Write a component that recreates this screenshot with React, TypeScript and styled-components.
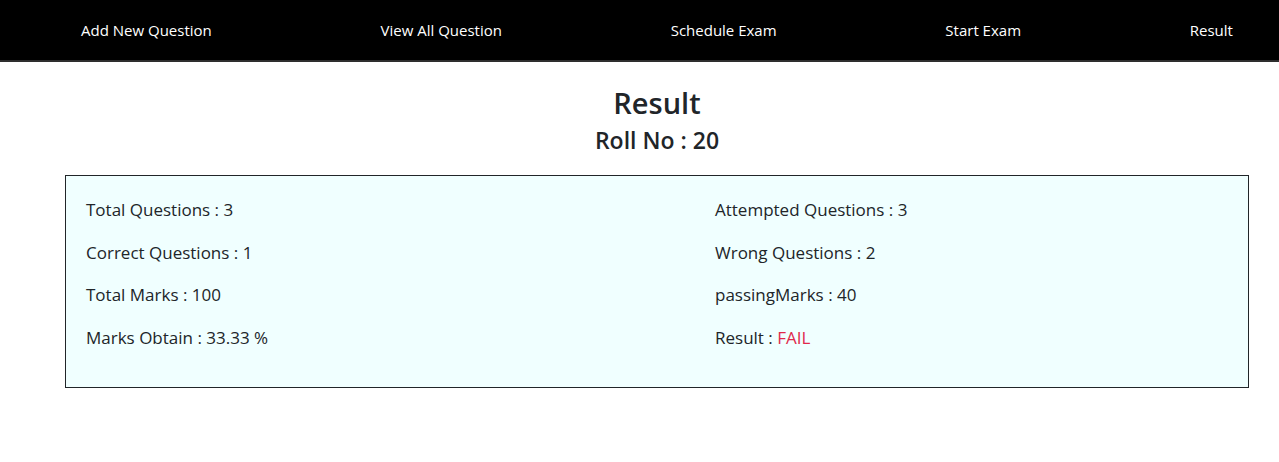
import React from "react";
import styled, { createGlobalStyle } from "styled-components";

const Global = createGlobalStyle`
  html, body { margin: 0; padding: 0; background: #fff; }
  body { font-family: "Open Sans", "Noto Sans", sans-serif; color: #212529; }
`;

const Nav = styled.nav`
  height: 60px;
  background: #000;
  border-bottom: 2px solid #2e2e2e;
  display: flex;
  align-items: center;
  justify-content: space-between;
  padding: 0 46px 0 81px;
`;

const NavLink = styled.a`
  color: #fff;
  font-size: 15px;
  text-decoration: none;
`;

const Main = styled.main`
  margin: 0 30px 0 65px;
`;

const Title = styled.h3`
  margin: 23px 0 0;
  text-align: center;
  font-size: 29px;
  font-weight: 600;
  line-height: 36px;
`;

const Sub = styled.h4`
  margin: 4px 0 20px;
  text-align: center;
  font-size: 23px;
  font-weight: 600;
  line-height: 30px;
`;

const Card = styled.section`
  background: #f0ffff;
  border: 1px solid #212529;
  height: 213px;
  box-sizing: border-box;
  display: grid;
  grid-template-columns: 629px 1fr;
  grid-auto-rows: 42.7px;
  padding: 21px 20px 0 20px;
`;

const Item = styled.p`
  margin: 0;
  font-size: 17px;
  font-weight: 500;
  line-height: 26px;
`;

const Fail = styled.span`
  color: #e0294b;
`;

const rows: [React.ReactNode, React.ReactNode][] = [
  ["Total Questions : 3", "Attempted Questions : 3"],
  ["Correct Questions : 1", "Wrong Questions : 2"],
  ["Total Marks : 100", "passingMarks : 40"],
  ["Marks Obtain : 33.33 %", <>Result : <Fail>FAIL</Fail></>],
];

export default function App() {
  return (
    <>
      <Global />
      <Nav>
        {["Add New Question", "View All Question", "Schedule Exam", "Start Exam", "Result"].map((t) => (
          <NavLink key={t} href="#">{t}</NavLink>
        ))}
      </Nav>
      <Main>
        <Title>Result</Title>
        <Sub>Roll No : 20</Sub>
        <Card>
          {rows.map(([a, b], i) => (
            <React.Fragment key={i}>
              <Item>{a}</Item>
              <Item>{b}</Item>
            </React.Fragment>
          ))}
        </Card>
      </Main>
    </>
  );
}
